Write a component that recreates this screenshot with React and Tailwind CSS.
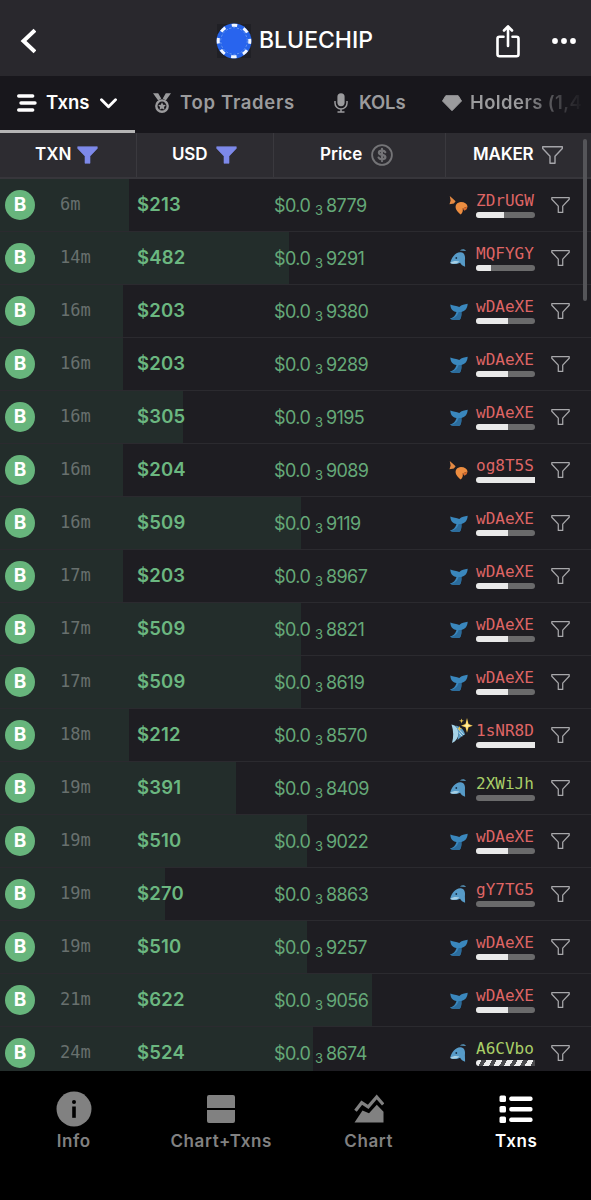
import clsx from 'clsx';

const TXNS = [
  { age: '6m', usd: '$213', price: '8779', maker: 'ZDrUGW', animal: 'shrimp', held: 48, fill: 129 },
  { age: '14m', usd: '$482', price: '9291', maker: 'MQFYGY', animal: 'dolphin', held: 26, fill: 289 },
  { age: '16m', usd: '$203', price: '9380', maker: 'wDAeXE', animal: 'whale', held: 55, fill: 123 },
  { age: '16m', usd: '$203', price: '9289', maker: 'wDAeXE', animal: 'whale', held: 55, fill: 123 },
  { age: '16m', usd: '$305', price: '9195', maker: 'wDAeXE', animal: 'whale', held: 55, fill: 183 },
  { age: '16m', usd: '$204', price: '9089', maker: 'og8T5S', animal: 'shrimp', held: 100, fill: 123 },
  { age: '16m', usd: '$509', price: '9119', maker: 'wDAeXE', animal: 'whale', held: 55, fill: 301 },
  { age: '17m', usd: '$203', price: '8967', maker: 'wDAeXE', animal: 'whale', held: 55, fill: 123 },
  { age: '17m', usd: '$509', price: '8821', maker: 'wDAeXE', animal: 'whale', held: 55, fill: 301 },
  { age: '17m', usd: '$509', price: '8619', maker: 'wDAeXE', animal: 'whale', held: 55, fill: 301 },
  { age: '18m', usd: '$212', price: '8570', maker: '1sNR8D', animal: 'fish', held: 100, fill: 129 },
  { age: '19m', usd: '$391', price: '8409', maker: '2XWiJh', animal: 'dolphin', held: 0, fill: 236, fresh: true },
  { age: '19m', usd: '$510', price: '9022', maker: 'wDAeXE', animal: 'whale', held: 55, fill: 307 },
  { age: '19m', usd: '$270', price: '8863', maker: 'gY7TG5', animal: 'dolphin', held: 0, fill: 165 },
  { age: '19m', usd: '$510', price: '9257', maker: 'wDAeXE', animal: 'whale', held: 55, fill: 307 },
  { age: '21m', usd: '$622', price: '9056', maker: 'wDAeXE', animal: 'whale', held: 55, fill: 372 },
  { age: '24m', usd: '$524', price: '8674', maker: 'A6CVbo', animal: 'dolphin', striped: true, fill: 313, fresh: true },
];

function Funnel({ className, solid }) {
  return (
    <svg
      viewBox="0 0 21 18"
      className={className}
      fill={solid ? 'currentColor' : 'none'}
      stroke="currentColor"
      strokeWidth={solid ? 0.6 : 1.4}
      strokeLinejoin="round"
    >
      <path d="M.7.7h19.6v1.8L13 10.2v7.1H8v-7.1L.7 2.5z" />
    </svg>
  );
}

function Chip() {
  return (
    <svg viewBox="0 0 36 36" className="size-9 shrink-0">
      <rect x="1" y="1" width="34" height="34" fill="#202025" />
      <circle cx="18" cy="18" r="17.5" fill="#2563e8" />
      <circle cx="18" cy="18" r="15.8" fill="none" stroke="#f1f6ff" strokeWidth="3" strokeDasharray="5.6 6.809" strokeDashoffset="2.8" />
      <circle cx="18" cy="18" r="13.2" fill="none" stroke="#6d9af5" strokeWidth="1" strokeDasharray="2.2 1.6" />
      <circle cx="18" cy="18" r="12.4" fill="#2864ee" />
    </svg>
  );
}

function Shrimp() {
  return (
    <svg viewBox="0 0 20 20" className="size-5">
      <path d="M.8 1 6.600 6.200 4.900 8.600.5 9.300 1.600 5.500z" fill="#e58a43" />
      <path d="M7.200 14.500C5.400 10.500 8 7.200 12 7.100c3.600 0 5.900 1.700 6.600 4.400l-5 1.900c.7 2.100 0 4.200-1.900 6.100-1.700-1.200-3.400-2.800-4.500-5z" fill="#ed8d40" />
      <path d="m18.600 11.500-.9 2.700-2.300 1.600-1.800-2.400z" fill="#d86c2e" />
    </svg>
  );
}

function Dolphin() {
  return (
    <svg viewBox="0 0 20 20" className="size-5">
      <path d="M10.800 2.600C13.300.6 15.800.8 17 3.100l-3.600-.3z" fill="#5593b9" />
      <path d="M1.200 14.900C2.500 9 6.400 4.600 11.200 4.300c4.200-.2 5.300 3.700 4.700 8l.2 6.500c-2.300-.9-4.100-2.200-5-4.100-3 1.500-6.600 1.900-9.900.2z" fill="#579bc8" />
      <path d="M1.200 14.900c2.600-2 6-2.400 9.200-1.400-2.400 2.400-6.100 2.900-9.200 1.400z" fill="#a8cfe4" />
      <circle cx="7.300" cy="10" r=".9" fill="#183247" />
    </svg>
  );
}

function Whale() {
  return (
    <svg viewBox="0 0 20 20" className="size-5">
      <path d="M1.300 3.400c3 1.400 6.300 1 9 2.600 2.400-2.300 5-2.500 8.400-3.200-.3 5-2.700 7.300-6.300 8.200.2 3.100-.2 5.500-1.400 7.400-3.600 1-7.100.8-10.100-.6 3.200-1 5.600-2.800 6.600-6.700C3.700 10.200 1.500 8 1.300 3.400z" fill="#3a87bd" />
      <path d="M.9 17.800c4.500-.5 7.500-2.600 8.700-6.900l2.800.1c.2 3.100-.2 5.500-1.400 7.400-3.600 1-7.100.8-10.100-.6z" fill="#2c6c9c" />
    </svg>
  );
}

function SparkleFish() {
  return (
    <svg viewBox="0 0 24 28" className="-mt-2 -mr-1 h-7 w-6 shrink-0">
      <path d="M2.500 7.500c4.700 1 7 4 7 8.500 0 4.700-2.500 8.300-6.500 10 1.700-6 1.700-12-.5-18.500z" fill="#a6d3e8" />
      <path d="M6.400 8.400c5.200 1 9 4.800 9.600 9.200-2.800 1-4.500 3-7.500 5.400 1.500-5.500 1-10.400-2.100-14.600z" fill="#5d9dc4" />
      <path d="m9.500 12 5.400 5.800M10 15.500l3 3.800" stroke="#c8e5f1" />
      <path d="m18 1 1.500 6 4.300 1.700-4.300 1.500-1.500 5.600-1.500-5.600L12 8.700 16.500 7z" fill="#ffd35c" />
      <path d="m18 4.500.7 3.300 2.500.9-2.500.8-.7 3.100-.8-3.100-2.500-.8 2.500-.9z" fill="#fff0a8" />
      <path d="m12.500 1.500.6 1.800 1.900.5-1.900.7-.6 1.900-.6-1.900-1.900-.7 1.900-.5zM10.500 9l.7 1.900 1.800.7-1.800.7-.7 1.900-.7-1.900-1.800-.7 1.800-.7z" fill="#e3bf4a" />
    </svg>
  );
}

const ANIMALS = { shrimp: Shrimp, dolphin: Dolphin, whale: Whale, fish: SparkleFish };

function HoldBar({ held, striped }) {
  if (striped) {
    return (
      <div className="h-1.5 w-[59px] rounded-l-full bg-[repeating-linear-gradient(120deg,#eeeeee_0_5px,#4b4b4e_5px_9px)]" />
    );
  }
  return (
    <div className={clsx('h-1.5 w-[59px] overflow-hidden rounded-l-full bg-[#6a6a6b]', held < 100 && 'rounded-r-full')}>
      <div className="h-full bg-[#e9e9e9]" style={{ width: `${held}%` }} />
    </div>
  );
}

function TxnRow({ txn }) {
  const Animal = ANIMALS[txn.animal];
  return (
    <div
      className="flex h-[53px] shrink-0 items-center border-b border-[#2b2a2f] bg-[#1e1d22] bg-[linear-gradient(#232d2b,#232d2b)] bg-no-repeat bg-origin-border"
      style={{ backgroundSize: `${txn.fill}px 100%` }}
    >
      <div className="ml-[5px] flex size-[30px] shrink-0 items-center justify-center rounded-full bg-[#67b57c] text-[19px] font-bold text-white">
        B
      </div>
      <div className="ml-[25px] w-[77px] font-['DejaVu_Sans_Mono',monospace] text-[17px] text-[#68706e]">{txn.age}</div>
      <div className="w-[137px] text-[18.5px] font-semibold tracking-[0.2px] text-[#6bb780]">{txn.usd}</div>
      <div className="flex w-[173px] items-baseline text-[18px] text-[#65a978]">
        <span className="w-[41px] tracking-[-0.6px]">$0.0</span>
        <span className="relative top-[3px] w-[11px] text-[13px]">3</span>
        <span className="tracking-[-0.6px]">{txn.price}</span>
      </div>
      <div className="ml-0.5 flex w-[27px] shrink-0 items-center">
        <Animal />
      </div>
      <div className="flex w-[75px] flex-col">
        <span
          className={clsx(
            "-mt-px font-['DejaVu_Sans_Mono',monospace] text-[16px] leading-[19px]",
            txn.fresh ? 'text-[#a9cf68]' : 'text-[#df6565]',
          )}
        >
          {txn.maker}
        </span>
        <div className="mt-0.5">
          <HoldBar held={txn.held} striped={txn.striped} />
        </div>
      </div>
      <Funnel className="h-4 w-[19px] text-[#a8a8ab]" />
    </div>
  );
}

function Header() {
  return (
    <header className="flex h-[76px] shrink-0 items-center bg-[#29282d] pt-[5px] text-white">
      <svg viewBox="0 0 16 26" className="ml-5 h-[26px] w-4" fill="none" stroke="currentColor" strokeWidth="4" strokeLinecap="square">
        <path d="M13.500 3.500 3.500 13l10 9.500" />
      </svg>
      <div className="ml-[180px] flex items-center gap-[7px]">
        <Chip />
        <h1 className="w-[114px] text-[23px] font-medium tracking-[0px]">BLUECHIP</h1>
      </div>
      <svg viewBox="0 0 24 34" className="ml-[123px] h-[34px] w-6" fill="none" stroke="currentColor" strokeWidth="2.600" strokeLinecap="round" strokeLinejoin="round">
        <path d="M7.500 12.700h-4a2 2 0 0 0-2 2v15.600a2 2 0 0 0 2 2h17a2 2 0 0 0 2-2V14.700a2 2 0 0 0-2-2h-4M12 22V3M8 6.500l4-4.200 4 4.200" />
      </svg>
      <svg viewBox="0 0 24 6" className="ml-8 h-1.5 w-6" fill="currentColor">
        <circle cx="3" cy="3" r="2.900" />
        <circle cx="12" cy="3" r="2.900" />
        <circle cx="21" cy="3" r="2.900" />
      </svg>
    </header>
  );
}

function Tabs() {
  return (
    <nav className="flex h-[57px] shrink-0 overflow-hidden bg-[#18171c] text-[18.5px] font-semibold whitespace-nowrap text-[#9b9b9d]">
      <div className="flex w-[135px] shrink-0 items-center border-b-[3px] border-[#b5b5b5] pl-[17px] text-white">
        <svg viewBox="0 0 20 18" className="h-[18px] w-5 shrink-0" stroke="currentColor" strokeWidth="3.400" strokeLinecap="round">
          <path d="M1.700 2h14M4 9h14M1.700 16h14" />
        </svg>
        <span className="ml-[9px] w-[54px]">Txns</span>
        <svg viewBox="0 0 17 11" className="h-[11px] w-[17px]" fill="none" stroke="currentColor" strokeWidth="2.900" strokeLinecap="round" strokeLinejoin="round">
          <path d="m1.500 1.800 7 7 7-7" />
        </svg>
      </div>
      <div className="flex shrink-0 items-center pb-[3px] pl-[17px]">
        <svg viewBox="0 0 20 20" className="h-5 w-5" fill="currentColor">
          <path d="M1 .3h5.200l3 5.300-3 2zM19 .3h-5.200l-3 5.300 3 2z" />
          <path fillRule="evenodd" d="M10 6.200a6.900 6.900 0 1 1 0 13.800 6.900 6.900 0 0 1 0-13.800zm0 2.400a4.500 4.500 0 1 0 0 9 4.500 4.500 0 0 0 0-9z" />
          <path d="m10 9.200 1.200 2.500 2.700.4-1.900 1.900.4 2.700-2.400-1.300-2.400 1.300.4-2.700-1.900-1.900 2.700-.4z" />
        </svg>
        <span className="ml-2 w-[154px] tracking-[0.7px]">Top Traders</span>
        <svg viewBox="0 0 14 20" className="h-5 w-3.5" fill="currentColor">
          <rect x="3.400" y=".2" width="7.200" height="13" rx="3.600" />
          <path d="M1 8v2a6 6 0 0 0 12 0V8M7 16v3M3.500 19h7" fill="none" stroke="currentColor" strokeWidth="1.500" />
        </svg>
        <span className="ml-[11px] w-[83px] tracking-[-0.2px]">KOLs</span>
        <svg viewBox="0 0 20 16" className="h-4 w-5" fill="currentColor">
          <path d="M3.800.7h12.400L19.500 6 10 15.700.5 6z" stroke="currentColor" strokeLinejoin="round" />
        </svg>
        <span className="ml-2 bg-gradient-to-r from-[#9b9b9d] from-45% to-[#1b1a1f] bg-clip-text tracking-[0.400px] text-transparent">
          Holders (1,4
        </span>
      </div>
    </nav>
  );
}

function TableHead() {
  return (
    <div className="flex h-[46px] shrink-0 border-b-2 border-[#37363b] bg-[#2d2c31] pt-px text-[17px] font-semibold text-white">
      <div className="-mt-px flex w-[137px] items-center border-r border-[#3a393e] pl-[35px]">
        <span className="w-[42px]">TXN</span>
        <Funnel solid className="h-[18px] w-[21px] text-[#7d89e9]" />
      </div>
      <div className="-mt-px flex w-[137px] items-center border-r border-[#3a393e] pl-[35px]">
        <span className="w-[44px] tracking-[-0.2px]">USD</span>
        <Funnel solid className="h-[18px] w-[21px] text-[#7d89e9]" />
      </div>
      <div className="-mt-px flex w-[172px] items-center border-r border-[#3a393e] pl-[46px]">
        <span className="w-[51px]">Price</span>
        <svg viewBox="0 0 22 22" className="size-[22px]" fill="none" stroke="#747477" strokeWidth="1.800" strokeLinecap="round">
          <circle cx="11" cy="11" r="9.900" />
          <path d="M14.300 8.200c-.5-1.100-1.600-1.500-3.300-1.500-1.900 0-3.100.8-3.100 2.100 0 2.800 6.500 1.400 6.500 4.300 0 1.400-1.300 2.200-3.400 2.200-1.800 0-2.900-.6-3.400-1.700M11 4.900v12.200" strokeWidth="2.200" />
        </svg>
      </div>
      <div className="-mt-px flex flex-1 items-center pl-[27px]">
        <span className="w-[69px] tracking-[-0.2px]">MAKER</span>
        <Funnel className="h-[18px] w-[21px] text-[#a5a5aa]" />
      </div>
    </div>
  );
}

function NavItem({ label, active, children }) {
  return (
    <div className={clsx('flex flex-1 flex-col items-center', active ? 'text-white' : 'text-[#818181]')}>
      <div className="flex h-[36px] items-center justify-center">{children}</div>
      <span className="mt-1 text-[17px] leading-[20px] font-semibold tracking-[0.600px]">{label}</span>
    </div>
  );
}

function BottomNav() {
  return (
    <nav className="flex h-[129px] shrink-0 bg-black pt-5 pr-px">
      <NavItem label="Info">
        <svg viewBox="0 0 36 36" className="size-9">
          <circle cx="18" cy="18" r="17.500" fill="currentColor" />
          <circle cx="18" cy="11" r="2" fill="#000" />
          <path d="M16.200 15.500h3.600v11.300h-3.600z" fill="#000" />
        </svg>
      </NavItem>
      <NavItem label="Chart+Txns">
        <svg viewBox="0 0 30 30" className="size-[30px]" fill="currentColor">
          <path d="M1 3a2 2 0 0 1 2-2h24a2 2 0 0 1 2 2v11H1zM1 16h28v11a2 2 0 0 1-2 2H3a2 2 0 0 1-2-2z" />
        </svg>
      </NavItem>
      <NavItem label="Chart">
        <svg viewBox="0 0 30 30" className="size-[30px]" fill="currentColor">
          <path d="M.5 28.500 8.500 16.500l6.500 2.800 7.800-8.500 6.700 7v10.700z" />
          <path d="m1.500 16.800 6.200-8.100 6.500 4.200 8.500-9.900 6.500 7.500" fill="none" stroke="currentColor" strokeWidth="3.200" />
        </svg>
      </NavItem>
      <NavItem label="Txns" active>
        <svg viewBox="0 0 34 30" className="h-[30px] w-[34px]" fill="currentColor">
          <rect x=".5" y="1.500" width="6.500" height="6.500" rx="1.500" />
          <rect x=".5" y="12" width="6.500" height="6.500" rx="1.500" />
          <rect x=".5" y="22.500" width="6.500" height="6.500" rx="1.500" />
          <rect x="10.300" y="2.500" width="23.200" height="4.500" rx="1.800" />
          <rect x="10.300" y="13" width="23.200" height="4.500" rx="1.800" />
          <rect x="10.300" y="23.500" width="23.200" height="4.500" rx="1.800" />
        </svg>
      </NavItem>
    </nav>
  );
}

export default function App() {
  return (
    <div className="flex h-[1200px] w-[591px] flex-col overflow-hidden bg-[#1e1d22] font-[Inter,sans-serif]">
      <Header />
      <Tabs />
      <div className="relative flex h-[938px] shrink-0 flex-col overflow-hidden">
        <TableHead />
        {TXNS.map((txn, i) => (
          <TxnRow key={i} txn={txn} />
        ))}
        <div className="absolute top-1.5 right-1 h-[162px] w-1 rounded-full bg-[#555559]" />
      </div>
      <BottomNav />
    </div>
  );
}
